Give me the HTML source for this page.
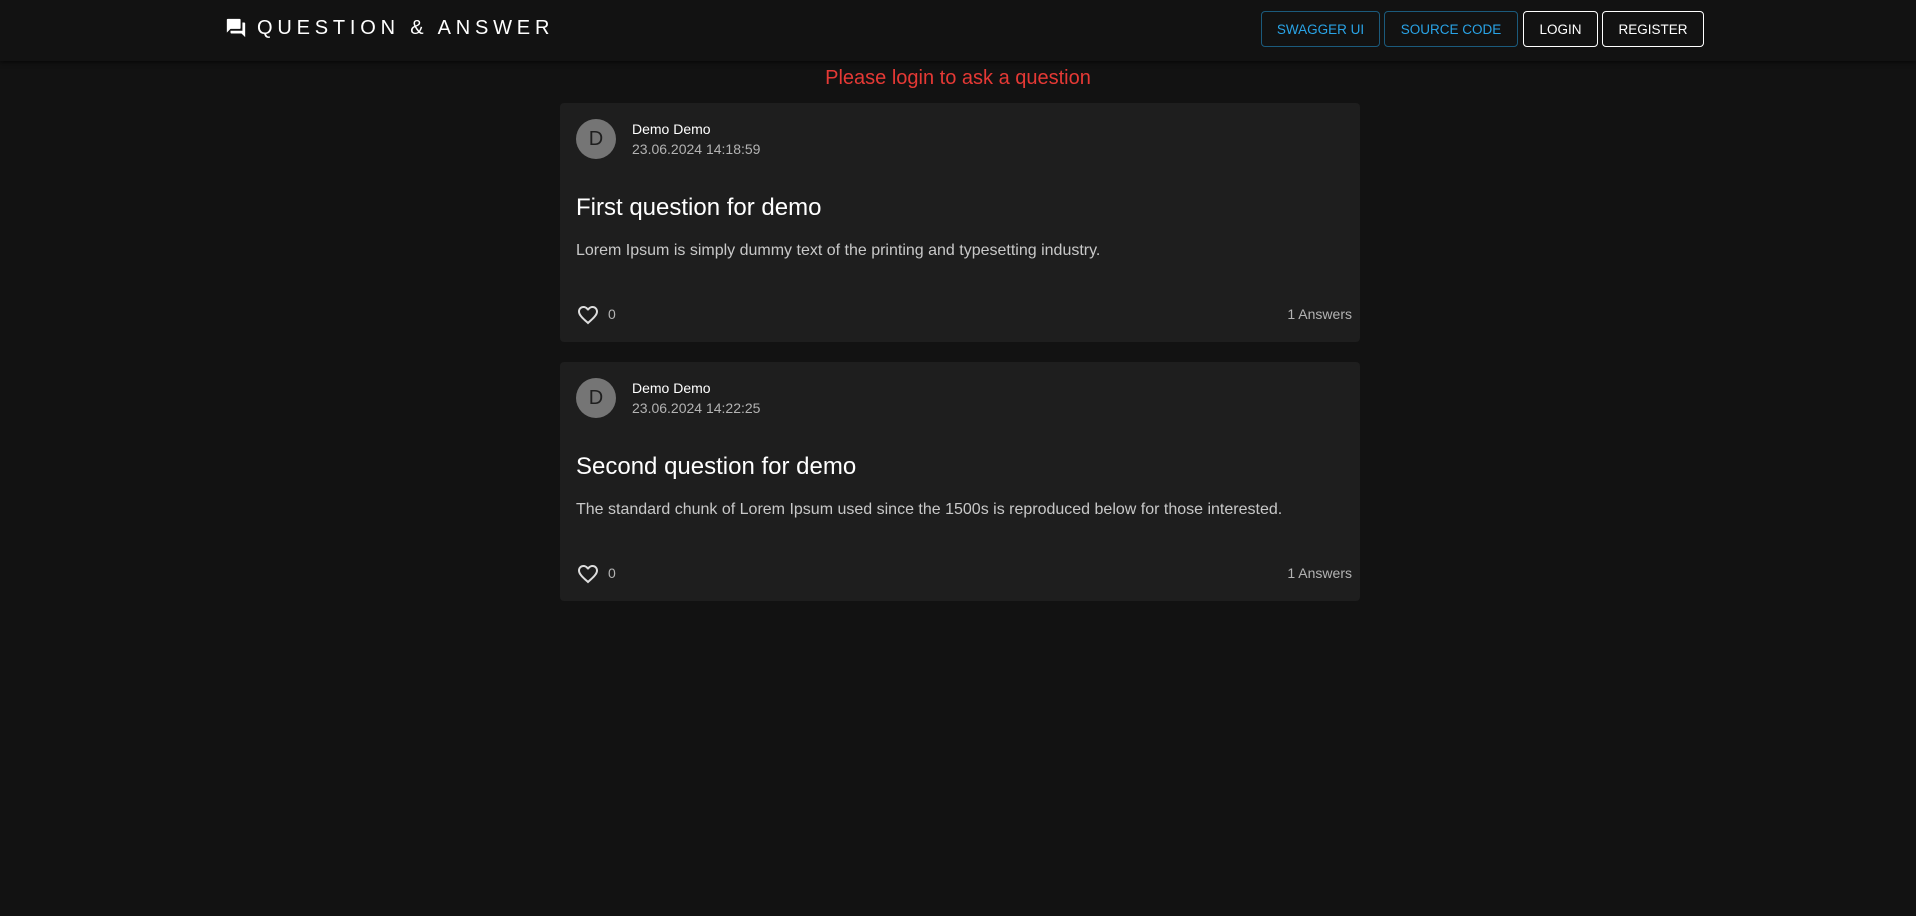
<!DOCTYPE html>
<html><head><meta charset="utf-8"><style>
*{box-sizing:border-box;margin:0;padding:0}
body{width:1916px;height:916px;background:#121212;font-family:"Liberation Sans",Arial,sans-serif;color:#fff;overflow:hidden;position:relative}
.hdr{position:absolute;left:0;top:0;width:1916px;height:61px;background:#121212;box-shadow:0 2px 4px rgba(0,0,0,.5)}
.logo{position:absolute;left:225px;top:17px;display:flex;align-items:center}
.logo span{font-size:20px;letter-spacing:4.8px;margin-left:10px;line-height:22px}
.btn{position:absolute;top:11px;height:36px;border:1px solid;border-radius:4px;font-size:13.5px;display:flex;align-items:center;justify-content:center}
.b1{color:#29a3e6;border-color:#1b5a7c}
.b2{color:#fff;border-color:#fff}
.msg{position:absolute;top:67px;left:0;width:1916px;text-align:center;color:#e53935;font-size:20px}
.card{position:absolute;left:560px;width:800px;height:239px;background:#1e1e1e;border-radius:4px}
.av{position:absolute;left:16px;top:16px;width:40px;height:40px;border-radius:50%;background:#757575;color:#1e1e1e;font-size:20px;display:flex;align-items:center;justify-content:center}
.nm{position:absolute;left:72px;top:18px;font-size:14px}
.dt{position:absolute;left:72px;top:38px;font-size:14px;color:#b3b3b3}
.tt{position:absolute;left:16px;top:91px;font-size:24px}
.bd{position:absolute;left:16px;top:139px;font-size:16px;color:#c8c8c8}
.hr{position:absolute;left:16px;top:200px}
.cnt{position:absolute;left:48px;top:203px;font-size:14px;color:#b3b3b3}
.ans{position:absolute;right:8px;top:203px;font-size:14px;color:#b3b3b3}
</style></head><body>
<div class="hdr">
<div class="logo"><svg width="22" height="22" viewBox="0 0 24 24"><path fill="#fff" d="M21 6h-2v9H6v2c0 .55.45 1 1 1h11l4 4V7c0-.55-.45-1-1-1zm-4 6V3c0-.55-.45-1-1-1H3c-.55 0-1 .45-1 1v14l4-4h10c.55 0 1-.45 1-1z"/></svg><span>QUESTION &amp; ANSWER</span></div>
<div class="btn b1" style="left:1261px;width:119px">SWAGGER UI</div>
<div class="btn b1" style="left:1384px;width:134px">SOURCE CODE</div>
<div class="btn b2" style="left:1523px;width:75px">LOGIN</div>
<div class="btn b2" style="left:1602px;width:102px">REGISTER</div>
</div>
<div class="msg">Please login to ask a question</div>
<div class="card" style="top:103px">
<div class="av">D</div><div class="nm">Demo Demo</div><div class="dt">23.06.2024 14:18:59</div>
<div class="tt">First question for demo</div>
<div class="bd">Lorem Ipsum is simply dummy text of the printing and typesetting industry.</div>
<svg class="hr" width="24" height="24" viewBox="0 0 24 24"><path fill="#ddd" d="M16.5 3c-1.74 0-3.41.81-4.5 2.09C10.91 3.81 9.24 3 7.5 3 4.42 3 2 5.42 2 8.5c0 3.78 3.4 6.86 8.55 11.54L12 21.35l1.45-1.32C18.6 15.36 22 12.28 22 8.5 22 5.42 19.58 3 16.5 3zm-4.4 15.55-.1.1-.1-.1C7.14 14.24 4 11.39 4 8.5 4 6.5 5.5 5 7.5 5c1.54 0 3.04.99 3.57 2.36h1.87C13.460 5.99 14.96 5 16.5 5c2 0 3.5 1.5 3.5 3.5 0 2.89-3.14 5.74-7.9 10.05z"/></svg>
<div class="cnt">0</div><div class="ans">1 Answers</div>
</div>
<div class="card" style="top:362px">
<div class="av">D</div><div class="nm">Demo Demo</div><div class="dt">23.06.2024 14:22:25</div>
<div class="tt">Second question for demo</div>
<div class="bd">The standard chunk of Lorem Ipsum used since the 1500s is reproduced below for those interested.</div>
<svg class="hr" width="24" height="24" viewBox="0 0 24 24"><path fill="#ddd" d="M16.5 3c-1.74 0-3.41.81-4.5 2.09C10.91 3.81 9.24 3 7.5 3 4.42 3 2 5.42 2 8.5c0 3.78 3.4 6.86 8.55 11.54L12 21.35l1.45-1.32C18.6 15.36 22 12.28 22 8.5 22 5.42 19.58 3 16.5 3zm-4.4 15.55-.1.1-.1-.1C7.14 14.24 4 11.39 4 8.5 4 6.5 5.5 5 7.5 5c1.54 0 3.04.99 3.57 2.36h1.87C13.46 5.99 14.96 5 16.5 5c2 0 3.5 1.5 3.5 3.5 0 2.89-3.14 5.74-7.9 10.05z"/></svg>
<div class="cnt">0</div><div class="ans">1 Answers</div>
</div>
</body></html>
